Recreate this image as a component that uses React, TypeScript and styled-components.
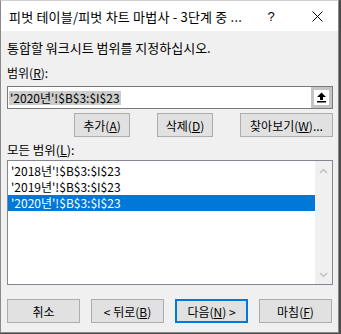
import { createGlobalStyle } from 'styled-components'
import styled from 'styled-components'

const GlobalStyle = createGlobalStyle`
	html, body {
		margin: 0;
		padding: 0;
		background-color: #4a4a4a;
	}
	body {
		font-family: 'Noto Sans CJK KR', 'Noto Sans', sans-serif;
		font-size: 12px;
		color: #000;
	}
`

const Window = styled.div`
	width: 339px;
	height: 333px;
	box-sizing: border-box;
	border: 1px solid #8a8a8a;
	border-top-color: #d0d0d0;
	background-color: #f0f0f0;
	display: flex;
	flex-direction: column;
`
const TitleBar = styled.div`
	height: 30px;
	background-color: #fff;
	display: flex;
	align-items: center;
	padding-left: 8px;
`
const Title = styled.div`
	flex: 1;
	font-size: 13px;
	letter-spacing: 0.2px;
	white-space: nowrap;
`
const TitleButton = styled.div<{ $w: number }>`
	width: ${p => p.$w}px;
	height: 30px;
	display: flex;
	align-items: center;
	justify-content: center;
	font-family: 'Liberation Sans', sans-serif;
	font-size: 13px;
`
const Body = styled.div`
	flex: 1;
	display: flex;
	flex-direction: column;
	padding: 0 5px 0 6px;
`
const Text = styled.div<{ $top: number; $size?: number }>`
	margin-top: ${p => p.$top}px;
	height: 16px;
	line-height: 16px;
	font-size: ${p => p.$size ?? 12}px;
	white-space: nowrap;
`
const InputBox = styled.div`
	margin-top: 5px;
	height: 23px;
	box-sizing: border-box;
	border: 1px solid #7a7a7a;
	background-color: #fff;
	display: flex;
	align-items: center;
	padding-left: 1px;
`
const Selected = styled.span`
	background-color: #cccccc;
	line-height: 14px;
	height: 14px;
	padding: 0 1px;
	flex: none;
`
const Spacer = styled.div`
	flex: 1;
`
const PickButton = styled.div`
	width: 21px;
	height: 21px;
	box-sizing: border-box;
	border: 3px solid #c4c4c4;
	background-color: #fff;
	display: flex;
	align-items: center;
	justify-content: center;
`
const ButtonRow = styled.div<{ $top: number; $gap: number; $end?: boolean }>`
	margin-top: ${p => p.$top}px;
	display: flex;
	justify-content: ${p => (p.$end ? 'flex-end' : 'flex-start')};
	gap: ${p => p.$gap}px;
`
const Button = styled.div<{ $w: number; $default?: boolean }>`
	width: ${p => p.$w}px;
	height: 24px;
	box-sizing: border-box;
	border: ${p => (p.$default ? '2px solid #0078d7' : '1px solid #adadad')};
	background-color: #e1e1e1;
	display: flex;
	align-items: center;
	justify-content: center;
	white-space: nowrap;
`
const ListBox = styled.div`
	margin-top: 2px;
	height: 125px;
	box-sizing: border-box;
	border: 1px solid #828790;
	background-color: #fff;
	display: flex;
`
const Items = styled.div`
	flex: 1;
	padding-top: 2px;
	display: flex;
	flex-direction: column;
`
const Item = styled.div<{ $selected?: boolean }>`
	height: 16px;
	line-height: 16px;
	padding-left: 3px;
	white-space: nowrap;
	background-color: ${p => (p.$selected ? '#0078d7' : 'transparent')};
	color: ${p => (p.$selected ? '#fff' : '#000')};
`
const ScrollBar = styled.div`
	width: 17px;
	background-color: #f0f0f0;
	display: flex;
	flex-direction: column;
	justify-content: space-between;
	align-items: center;
	padding: 7px 0 6px;
	box-sizing: border-box;
`

function Chevron({ down }: { down?: boolean }) {
	return (
		<svg width='9' height='6' viewBox='0 0 9 6'>
			<path
				d={down ? 'M1 1 L4.5 4.5 L8 1' : 'M1 5 L4.5 1.5 L8 5'}
				fill='none'
				stroke='#c0c0c0'
				strokeWidth='1.5'
			/>
		</svg>
	)
}

const items = ["'2018년'!$B$3:$I$23", "'2019년'!$B$3:$I$23", "'2020년'!$B$3:$I$23"]

export default function App() {
	return (
		<>
			<GlobalStyle />
			<Window>
				<TitleBar>
					<Title>피벗 테이블/피벗 차트 마법사 - 3단계 중 ...</Title>
					<TitleButton $w={50}>?</TitleButton>
					<TitleButton $w={42}>
						<svg width='11' height='11' viewBox='0 0 11 11'>
							<path d='M0.5 0.5 L10.5 10.5 M10.5 0.5 L0.5 10.5' stroke='#000' strokeWidth='1' />
						</svg>
					</TitleButton>
				</TitleBar>
				<Body>
					<Text $top={9} $size={13}>
						통합할 워크시트 범위를 지정하십시오.
					</Text>
					<Text $top={9}>
						범위(<u>R</u>):
					</Text>
					<InputBox>
						<Selected>'2020년'!$B$3:$I$23</Selected>
						<Spacer />
						<PickButton>
							<svg width='11' height='11' viewBox='0 0 11 11'>
								<path d='M5.5 0.5 L10 5 L7 5 L7 8 L4 8 L4 5 L1 5 Z' fill='#000' />
								<rect x='1' y='9' width='9' height='1.5' fill='#000' />
							</svg>
						</PickButton>
					</InputBox>
					<ButtonRow $top={4} $gap={27} $end>
						<Button $w={56}>
							추가(<u>A</u>)
						</Button>
						<Button $w={56}>
							삭제(<u>D</u>)
						</Button>
						<Button $w={93}>
							찾아보기(<u>W</u>)...
						</Button>
					</ButtonRow>
					<Text $top={5} $size={12.5}>
						모든 범위(<u>L</u>):
					</Text>
					<ListBox>
						<Items>
							{items.map((t, i) => (
								<Item key={t} $selected={i === 2}>
									{t}
								</Item>
							))}
						</Items>
						<ScrollBar>
							<Chevron />
							<Chevron down />
						</ScrollBar>
					</ListBox>
					<ButtonRow $top={14} $gap={11}>
						<Button $w={73}>취소</Button>
						<Button $w={73}>
							&lt; 뒤로(<u>B</u>)
						</Button>
						<Button $w={73} $default>
							다음(<u>N</u>) &gt;
						</Button>
						<Button $w={73}>
							마침(<u>F</u>)
						</Button>
					</ButtonRow>
				</Body>
			</Window>
		</>
	)
}
